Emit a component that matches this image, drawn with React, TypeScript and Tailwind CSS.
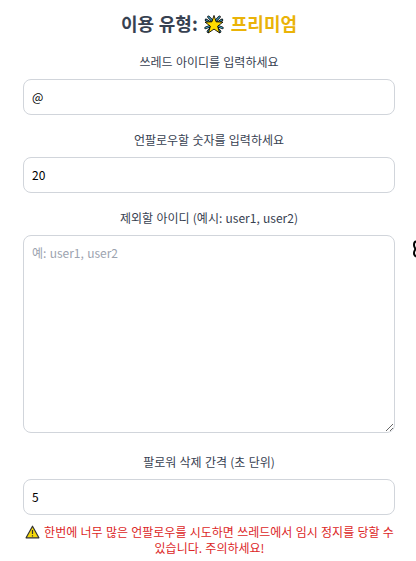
import { useState } from 'react'

interface FieldProps {
  label: string
  value: string
  onChange: (value: string) => void
}

const inputClass =
  'block h-9 w-full rounded-lg border border-[#d1d5db] bg-white px-2 text-xs text-black outline-none'

function Field({ label, value, onChange }: FieldProps) {
  return (
    <label className="block">
      <span className="mb-[9px] block text-center text-xs text-[#374151]">{label}</span>
      <input className={`${inputClass} pb-px`} value={value} onChange={(e) => onChange(e.target.value)} />
    </label>
  )
}

function StarIcon() {
  const rays =
    'M5.2 3 9 7M2.6 6.2 7 9M16.8 3 13 7M19.4 6.2 15 9M2.2 14.6 7 12.6M4.6 18.4 8 14.5M19.8 14.6 15 12.6M17.4 18.4 14 14.5'

  return (
    <svg viewBox="0 0 22 22" className="h-[21px] w-[22px] shrink-0">
      <path d={rays} stroke="#000" strokeWidth="2.6" strokeLinecap="round" />
      <path d={rays} stroke="#43a9cf" strokeWidth="1.1" strokeLinecap="round" />
      <path
        d="M11 1.5 13.2 8.2 20.4 8.5 14.8 12.8 16.9 19.9 11 15.8 5.1 19.9 7.2 12.8 1.6 8.5 8.8 8.2Z"
        fill="#ffdc00"
        stroke="#000"
        strokeWidth="0.9"
        strokeLinejoin="round"
      />
    </svg>
  )
}

function WarningIcon() {
  return (
    <svg viewBox="0 0 15 14" className="mr-[4px] inline-block h-[14px] w-[15px] align-[-2px]">
      <path d="M7.5 1.2 13.9 12.8H1.1Z" fill="#f5d90a" stroke="#333" strokeWidth="1.2" strokeLinejoin="round" />
      <path d="M7.5 5v4M7.5 10.3v1.2" stroke="#333" strokeWidth="1.2" />
    </svg>
  )
}

export default function App() {
  const [userId, setUserId] = useState('@')
  const [count, setCount] = useState('20')
  const [excluded, setExcluded] = useState('')
  const [delay, setDelay] = useState('5')

  return (
    <main className="relative h-[561px] overflow-hidden bg-white pl-[23px] pr-[21px] pt-[9px] font-['Noto_Sans_CJK_KR',sans-serif] [word-spacing:0.6px]">
      <h1 className="mb-[17px] flex h-7 items-center justify-center text-lg font-bold text-[#374151]">
        <span>이용 유형:</span>
        <span className="ml-[5px] mr-[6px] pt-[3px]">
          <StarIcon />
        </span>
        <span className="text-[#eab308]">프리미엄</span>
      </h1>

      <div className="flex flex-col gap-[17px]">
        <Field label="쓰레드 아이디를 입력하세요" value={userId} onChange={setUserId} />
        <Field label="언팔로우할 숫자를 입력하세요" value={count} onChange={setCount} />
        <label className="mb-1 block">
          <span className="mb-[9px] block text-center text-xs text-[#374151]">
            제외할 아이디 (예시: user1, user2)
          </span>
          <textarea
            className="block h-[198px] w-full resize rounded-lg border border-[#d1d5db] p-2 pt-[9px] text-xs text-black outline-none [word-spacing:0.6px] placeholder:text-[#9ca3af]"
            placeholder="예: user1, user2"
            value={excluded}
            onChange={(e) => setExcluded(e.target.value)}
          />
        </label>
        <Field label="팔로워 삭제 간격 (초 단위)" value={delay} onChange={setDelay} />
      </div>

      <p className="-mr-px mt-[9px] text-center text-xs text-[#dc2626]">
        <WarningIcon />
        한번에 너무 많은 언팔로우를 시도하면 쓰레드에서 임시 정지를 당할 수 있습니다. 주의하세요!
      </p>

      <svg viewBox="0 0 3 18" className="absolute right-0 top-[240px] h-[18px] w-[3px]">
        <path d="M3 1.5C1 1.5 1 3 1 5s1 3 1.5 4C2 10 1 11 1 13s1 3 2 3.5" fill="none" stroke="#000" strokeWidth="2" />
      </svg>
    </main>
  )
}
